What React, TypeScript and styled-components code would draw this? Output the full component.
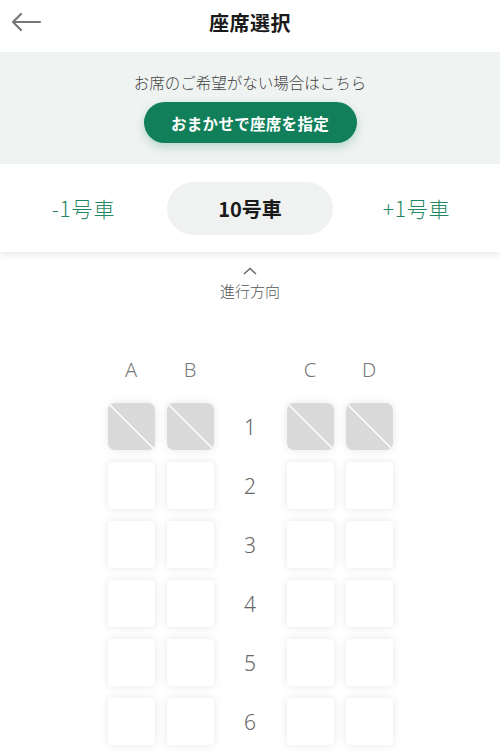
import React from 'react';
import styled, { createGlobalStyle } from 'styled-components';

const GlobalStyle = createGlobalStyle`
	html, body {
		margin: 0;
		padding: 0;
		background: #ffffff;
	}
	body {
		font-family: 'Noto Sans CJK JP', 'Noto Sans', sans-serif;
		color: #222;
	}
`;

const Page = styled.div`
	width: 500px;
	height: 753px;
	overflow: hidden;
	background: #fff;
`;

const Header = styled.header`
	height: 52px;
	display: flex;
	align-items: center;
	justify-content: center;
	position: relative;
`;

const BackButton = styled.button`
	position: absolute;
	left: 8px;
	top: 8px;
	width: 36px;
	height: 28px;
	border: none;
	background: none;
	padding: 0;
	display: flex;
	align-items: center;
	justify-content: center;
`;

const Title = styled.h1`
	margin: 0;
	margin-top: -8px;
	font-size: 20px;
	font-weight: 700;
	color: #1a1a1a;
	letter-spacing: 0.5px;
`;

const Band = styled.section`
	background: #eff3f1;
	height: 112px;
	display: flex;
	flex-direction: column;
	align-items: center;
	padding-top: 18px;
	box-sizing: border-box;
`;

const BandText = styled.p`
	margin: 0;
	font-size: 15.5px;
	line-height: 24px;
	font-weight: 300;
	color: #444;
`;

const GreenButton = styled.button`
	margin-top: 8px;
	width: 213px;
	height: 41px;
	border: none;
	border-radius: 21px;
	background: #11805a;
	color: #fff;
	font-family: inherit;
	font-size: 15.5px;
	font-weight: 700;
	letter-spacing: 0.3px;
	box-shadow: 0 4px 10px rgba(17, 128, 90, 0.25);
`;

const CarRow = styled.nav`
	height: 88px;
	display: grid;
	grid-template-columns: 1fr 166px 1fr;
	align-items: center;
	box-shadow: 0 4px 6px rgba(0, 0, 0, 0.07);
	position: relative;
`;

const CarLink = styled.span`
	font-size: 21px;
	font-weight: 300;
	color: #1f8862;
	text-align: center;
	letter-spacing: 0.8px;
`;

const CarPill = styled.div`
	height: 53px;
	border-radius: 27px;
	background: #f0f2f1;
	display: flex;
	align-items: center;
	justify-content: center;
	font-size: 20px;
	font-weight: 700;
	color: #1a1a1a;
`;

const Direction = styled.div`
	display: flex;
	flex-direction: column;
	align-items: center;
	padding-top: 15px;
	color: #555;
	font-size: 15px;
	font-weight: 300;
`;

const DirectionLabel = styled.span`
	margin-top: 5px;
	line-height: 22px;
`;

const Columns = styled.div`
	display: grid;
	grid-template-columns: 47px 47px 49px 47px 47px;
	column-gap: 12px;
	justify-content: center;
`;

const LabelRow = styled(Columns)`
	height: 24px;
	margin-top: 54px;
`;

const SeatGrid = styled(Columns)`
	grid-auto-rows: 47px;
	row-gap: 12px;
	margin-top: 23px;
`;

const ColLabel = styled.div`
	display: flex;
	align-items: center;
	justify-content: center;
	font-family: 'Noto Sans', sans-serif;
	font-weight: 300;
	font-size: 20px;
	color: #777;
`;

const RowNumber = styled.div`
	display: flex;
	align-items: center;
	justify-content: center;
	font-family: 'Noto Sans', sans-serif;
	font-weight: 300;
	font-size: 21px;
	color: #666;
`;

const Seat = styled.div<{ $blocked?: boolean }>`
	position: relative;
	border-radius: ${(p) => (p.$blocked ? '7px' : '4px')};
	background: ${(p) => (p.$blocked ? '#d9d9d9' : '#fff')};
	box-shadow: 0 0 9px rgba(0, 0, 0, 0.1);
	overflow: hidden;
`;

const Slash = styled.svg`
	position: absolute;
	inset: 0;
	width: 100%;
	height: 100%;
`;

const cols = ['A', 'B', '', 'C', 'D'];
const rows = [1, 2, 3, 4, 5, 6];

const SeatCell: React.FC<{ blocked: boolean }> = ({ blocked }) => (
	<Seat $blocked={blocked}>
		{blocked && (
			<Slash viewBox="0 0 47 47">
				<line x1="2" y1="2" x2="45" y2="45" stroke="#fff" strokeWidth="1.6" />
			</Slash>
		)}
	</Seat>
);

export default function App() {
	return (
		<Page>
			<GlobalStyle />
			<Header>
				<BackButton aria-label="戻る">
					<svg width="32" height="20" viewBox="0 0 32 20">
						<path
							d="M30 10H3M11 2L3 10L11 18"
							fill="none"
							stroke="#777"
							strokeWidth="2.2"
							strokeLinecap="round"
							strokeLinejoin="round"
						/>
					</svg>
				</BackButton>
				<Title>座席選択</Title>
			</Header>
			<Band>
				<BandText>お席のご希望がない場合はこちら</BandText>
				<GreenButton>おまかせで座席を指定</GreenButton>
			</Band>
			<CarRow>
				<CarLink>-1号車</CarLink>
				<CarPill>10号車</CarPill>
				<CarLink>+1号車</CarLink>
			</CarRow>
			<Direction>
				<svg width="14" height="8" viewBox="0 0 14 8">
					<path d="M1 7L7 1.5L13 7" fill="none" stroke="#666" strokeWidth="1.4" />
				</svg>
				<DirectionLabel>進行方向</DirectionLabel>
			</Direction>
			<LabelRow>
				{cols.map((c, i) => (
					<ColLabel key={'h' + i}>{c}</ColLabel>
				))}
			</LabelRow>
			<SeatGrid>
				{rows.map((r) =>
					cols.map((c) =>
						c === '' ? (
							<RowNumber key={r + '-n'}>{r}</RowNumber>
						) : (
							<SeatCell key={r + c} blocked={r === 1} />
						)
					)
				)}
			</SeatGrid>
		</Page>
	);
}
